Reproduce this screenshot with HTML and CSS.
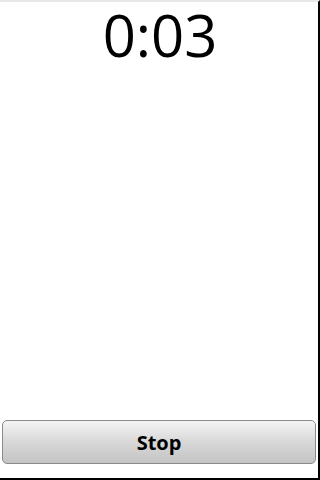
FILE: index.html
```html
<!DOCTYPE html>
<html lang="en">
<head>
    <meta charset="UTF-8">
    <meta name="viewport" content="width=device-width, initial-scale=1.0">
    <title>Timer</title>
    <link rel="stylesheet" href="styles.css">
</head>
<body>
    <div class="screen">
        <div class="time">0:03</div>
        <div class="spacer"></div>
        <button class="stop">Stop</button>
    </div>
</body>
</html>
```

FILE: styles.css
```css
html, body {
    margin: 0;
    padding: 0;
    background: #fff;
}
.screen {
    width: 318px;
    height: 476px;
    border-top: 2px solid #e8e8e8;
    border-right: 2px solid #000;
    border-bottom: 2px solid #000;
    display: flex;
    flex-direction: column;
    font-family: 'Open Sans', 'DejaVu Sans', sans-serif;
}
.time {
    font-size: 58px;
    line-height: 1.15;
    text-align: center;
    color: #000;
    padding-left: 2px;
}
.spacer {
    flex: 1;
}
.stop {
    margin: 0 2px 14px 2px;
    height: 44px;
    border: 1px solid #8a8a8a;
    border-radius: 5px;
    background: linear-gradient(#f4f4f4, #d8d8d8 50%, #c4c4c4);
    font-family: 'Open Sans', 'DejaVu Sans', sans-serif;
    font-weight: bold;
    font-size: 20px;
    color: #000;
    padding: 0;
}
```
